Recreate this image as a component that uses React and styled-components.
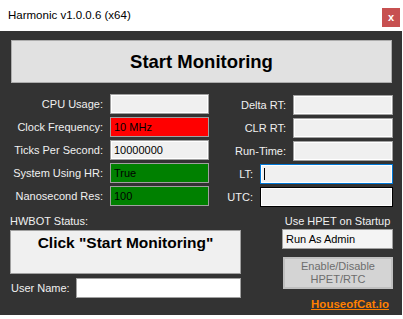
import React from "react";
import styled, { createGlobalStyle } from "styled-components";

const Global = createGlobalStyle`
  html, body { margin: 0; padding: 0; background: #ffffff; }
  body { font-family: "Liberation Sans", Arial, sans-serif; }
  * { box-sizing: border-box; }
`;

const Window = styled.div`
  width: 403px;
  height: 319px;
  background: #ffffff;
  display: flex;
  flex-direction: column;
  overflow: hidden;
`;

const TitleBar = styled.div`
  height: 31px;
  display: flex;
  justify-content: space-between;
  align-items: flex-start;
  padding: 0 3px 0 8px;
  background: #ffffff;
`;

const Title = styled.div`
  font-size: 11.5px;
  line-height: 31px;
  color: #000000;
`;

const CloseBtn = styled.div`
  margin-top: 8px;
  width: 18px;
  height: 19px;
  background: #c75050;
  color: #ffffff;
  font-weight: bold;
  font-size: 11px;
  line-height: 18px;
  text-align: center;
`;

const Body = styled.div`
  width: 402px;
  height: 284px;
  background: #333333;
  padding: 9px 0 0 10px;
  display: flex;
  flex-direction: column;
`;

const StartButton = styled.div`
  margin-left: 1px;
  width: 381px;
  height: 43px;
  background: #e1e1e1;
  border: 1px solid #adadad;
  display: flex;
  align-items: center;
  justify-content: center;
  font-weight: bold;
  font-size: 18.5px;
  color: #000;
`;

const Fields = styled.div`
  margin-top: 11px;
  display: flex;
  align-items: flex-start;
`;

const LeftGrid = styled.div`
  display: grid;
  grid-template-columns: 93px 99px;
  column-gap: 7px;
  row-gap: 3px;
`;

const Label = styled.div`
  color: #f0f0f0;
  font-size: 11px;
  line-height: 20px;
  text-align: ${(p) => p.$align || "right"};
  white-space: nowrap;
`;

const Field = styled.div`
  position: relative;
  flex-shrink: 0;
  height: 20px;
  width: ${(p) => p.$w || 99}px;
  background: ${(p) => p.$bg || "#f0f0f0"};
  border: 1px solid ${(p) => p.$border || "#a0a0a0"};
  box-shadow: ${(p) => (p.$inset ? "inset 0 0 0 1px #ffffff" : "none")};
  color: #000;
  font-size: 11px;
  line-height: 18px;
  padding-left: 3px;
  white-space: nowrap;
`;

const Caret = styled.span`
  position: absolute;
  left: 3px;
  top: 3px;
  width: 1px;
  height: 12px;
  background: #000;
`;

const RightCol = styled.div`
  margin-top: 1px;
  width: 184px;
  display: flex;
  flex-direction: column;
  gap: 3px;
`;

const RightRow = styled.div`
  display: flex;
  justify-content: flex-end;
  align-items: center;
  gap: 7px;
`;

const Bottom = styled.div`
  margin-top: 8px;
  display: flex;
  align-items: flex-start;
`;

const LeftBottom = styled.div`
  width: 231px;
  display: flex;
  flex-direction: column;
`;

const SmallLabel = styled.div`
  color: #f0f0f0;
  font-size: 11px;
  line-height: 13px;
  text-align: ${(p) => p.$align || "left"};
`;

const StatusBox = styled.div`
  margin-top: 2px;
  height: 44px;
  background: #f0f0f0;
  border: 1px solid #a0a0a0;
  text-align: center;
  font-weight: bold;
  font-size: 15.5px;
  line-height: 18px;
  padding-top: 3px;
  color: #000;
`;

const UserRow = styled.div`
  margin-top: 4px;
  display: flex;
  align-items: center;
  padding-left: 1px;
`;

const UserInput = styled.div`
  margin-left: auto;
  width: 165px;
  height: 20px;
  background: #ffffff;
  border: 1px solid #a0a0a0;
`;

const RightBottom = styled.div`
  margin-left: 41px;
  width: 111px;
  display: flex;
  flex-direction: column;
`;

const AdminBox = styled.div`
  margin-top: 1px;
  height: 20px;
  background: #f4f4f4;
  border: 1px solid #a0a0a0;
  font-size: 11px;
  line-height: 18px;
  padding-left: 3px;
  color: #000;
`;

const DisabledButton = styled.div`
  margin-top: 8px;
  margin-left: 1px;
  width: 110px;
  height: 32px;
  background: #d4d4d4;
  border: 2px solid #bfbfbf;
  color: #6d6d6d;
  font-size: 11px;
  line-height: 13px;
  text-align: center;
  display: flex;
  align-items: center;
  justify-content: center;
`;

const Link = styled.div`
  margin-top: 9px;
  padding-right: 4px;
  text-align: right;
  color: #ff8000;
  font-weight: bold;
  font-size: 11.5px;
  line-height: 13px;
  text-decoration: underline;
`;

const leftRows = [
  { label: "CPU Usage:", value: "", bg: "#f0f0f0", inset: true },
  { label: "Clock Frequency:", value: "10 MHz", bg: "#ff0000" },
  { label: "Ticks Per Second:", value: "10000000", bg: "#f0f0f0", inset: true },
  { label: "System Using HR:", value: "True", bg: "#008000" },
  { label: "Nanosecond Res:", value: "100", bg: "#008000" },
];

export default function App() {
  return (
    <>
      <Global />
      <Window>
        <TitleBar>
          <Title>Harmonic v1.0.0.6 (x64)</Title>
          <CloseBtn>x</CloseBtn>
        </TitleBar>
        <Body>
          <StartButton>Start Monitoring</StartButton>
          <Fields>
            <LeftGrid>
              {leftRows.map((r) => (
                <React.Fragment key={r.label}>
                  <Label>{r.label}</Label>
                  <Field $bg={r.bg} $inset={r.inset}>
                    {r.value}
                  </Field>
                </React.Fragment>
              ))}
            </LeftGrid>
            <RightCol>
              <RightRow>
                <Label>Delta RT:</Label>
                <Field $w={100} $inset />
              </RightRow>
              <RightRow>
                <Label>CLR RT:</Label>
                <Field $w={100} $inset />
              </RightRow>
              <RightRow>
                <Label>Run-Time:</Label>
                <Field $w={100} $inset />
              </RightRow>
              <RightRow>
                <Label>LT:</Label>
                <Field $w={133} $border="#0078d7" $inset>
                  <Caret />
                </Field>
              </RightRow>
              <RightRow>
                <Label>UTC:</Label>
                <Field $w={133} $border="#000000" $inset />
              </RightRow>
            </RightCol>
          </Fields>
          <Bottom>
            <LeftBottom>
              <SmallLabel>HWBOT Status:</SmallLabel>
              <StatusBox>Click "Start Monitoring"</StatusBox>
              <UserRow>
                <SmallLabel>User Name:</SmallLabel>
                <UserInput />
              </UserRow>
            </LeftBottom>
            <RightBottom>
              <SmallLabel $align="center">Use HPET on Startup</SmallLabel>
              <AdminBox>Run As Admin</AdminBox>
              <DisabledButton>
                Enable/Disable
                <br />
                HPET/RTC
              </DisabledButton>
              <Link>HouseofCat.io</Link>
            </RightBottom>
          </Bottom>
        </Body>
      </Window>
    </>
  );
}
